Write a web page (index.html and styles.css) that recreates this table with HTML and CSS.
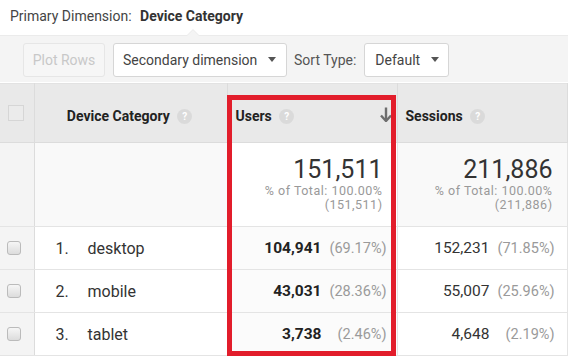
FILE: index.html
```html
<!DOCTYPE html>
<html>
<head>
<meta charset="utf-8">
<link rel="stylesheet" href="styles.css">
</head>
<body>
<div class="page">
  <div class="primary">Primary Dimension: <b>Device Category</b></div>
  <div class="toolbar">
    <span class="btn disabled">Plot Rows</span>
    <span class="btn sec">Secondary dimension <span class="caret"></span></span>
    <span class="label">Sort Type:</span>
    <span class="btn def">Default <span class="caret"></span></span>
  </div>
  <div class="tablewrap">
    <table class="data">
      <colgroup><col class="c0"><col class="c1"><col class="c2"><col class="c3"></colgroup>
      <thead>
        <tr>
          <th class="cb"><span class="hbox"></span></th>
          <th class="dim">Device Category <span class="help">?</span></th>
          <th class="met sorted">Users <span class="help">?</span><svg class="arrow" width="12" height="15" viewBox="0 0 12 15"><path d="M6 0.5V12.5" stroke="#6e6e6e" stroke-width="2.4" fill="none"/><path d="M1 8.5L6 14L11 8.5" stroke="#6e6e6e" stroke-width="2.4" fill="none" stroke-linejoin="miter"/></svg></th>
          <th class="met">Sessions <span class="help">?</span></th>
        </tr>
      </thead>
      <tbody>
        <tr class="total">
          <td class="cb"></td>
          <td class="dim"></td>
          <td class="num u"><div class="big">151,511</div><div class="pct">% of Total: 100.00%</div><div class="pct">(151,511)</div></td>
          <td class="num s"><div class="big">211,886</div><div class="pct">% of Total: 100.00%</div><div class="pct">(211,886)</div></td>
        </tr>
        <tr class="row">
          <td class="cb"><span class="rbox"></span></td>
          <td class="name"><span class="idx">1.</span>desktop</td>
          <td class="num u"><b>104,941</b><span class="p">(69.17%)</span></td>
          <td class="num s">152,231<span class="p">(71.85%)</span></td>
        </tr>
        <tr class="row">
          <td class="cb"><span class="rbox"></span></td>
          <td class="name"><span class="idx">2.</span>mobile</td>
          <td class="num u"><b>43,031</b><span class="p">(28.36%)</span></td>
          <td class="num s">55,007<span class="p">(25.96%)</span></td>
        </tr>
        <tr class="row">
          <td class="cb"><span class="rbox"></span></td>
          <td class="name"><span class="idx">3.</span>tablet</td>
          <td class="num u"><b>3,738</b><span class="p">(2.46%)</span></td>
          <td class="num s">4,648<span class="p">(2.19%)</span></td>
        </tr>
      </tbody>
    </table>
    <div class="highlight"></div>
  </div>
</div>
</body>
</html>
```

FILE: styles.css
```css
* { box-sizing: border-box; }
html, body { margin: 0; padding: 0; background: #fff; }
body { font-family: Roboto, "Liberation Sans", Arial, sans-serif; color: #333; }
.page { width: 574px; height: 363px; overflow: hidden; }

.primary { font-size: 14px; color: #444; padding: 8px 0 0 10px; height: 35px; white-space: nowrap; }
.primary b { font-weight: 700; color: #333; margin-left: 5px; }

.toolbar {
  position: relative;
  width: 568px;
  height: 47px;
  background: #f4f4f4;
  border-top: 1px solid #ebebeb;
  display: flex;
  align-items: center;
  padding-left: 23px;
  padding-top: 1px;
  white-space: nowrap;
}
.toolbar::before {
  content: "";
  position: absolute;
  left: 186px; top: -7px;
  border-left: 7px solid transparent;
  border-right: 7px solid transparent;
  border-bottom: 7px solid #ebebeb;
}
.toolbar::after {
  content: "";
  position: absolute;
  left: 187px; top: -6px;
  border-left: 6px solid transparent;
  border-right: 6px solid transparent;
  border-bottom: 6px solid #f4f4f4;
}
.btn {
  flex: none;
  height: 34px;
  display: inline-flex;
  align-items: center;
  padding: 0 10px;
  border: 1px solid #d6d6d6;
  border-radius: 3px;
  background: #fff;
  font-size: 14px;
  color: #444;
  white-space: nowrap;
}
.btn.disabled { width: 82px; padding: 0; justify-content: center; color: #c8c8c8; border-color: #e6e6e6; background: #f6f6f6; }
.btn.sec { width: 174px; margin-left: 8px; padding-left: 9px; }
.btn.def { width: 85px; margin-left: 8px; padding-left: 10px; }
.label { flex: none; font-size: 14px; color: #555; margin-left: 7px; }
.caret {
  display: inline-block;
  margin-left: 11px;
  border-left: 4.5px solid transparent;
  border-right: 4.5px solid transparent;
  border-top: 5px solid #555;
}

.tablewrap { position: relative; width: 567px; margin-top: 1px; }
table.data { border-collapse: collapse; table-layout: fixed; width: 567px; }
col.c0 { width: 34px; }
col.c1 { width: 193px; }
col.c2 { width: 170px; }
col.c3 { width: 170px; }

th { background: #e9e9e9; height: 59px; font-size: 14px; font-weight: 700; color: #222; border-top: 1px solid #e2e2e2; border-bottom: 1px solid #dcdcdc; padding: 5px 0 0 0; white-space: nowrap; }
th.cb, td.cb { border-right: 1px solid #dcdcdc; }
th.dim { text-align: center; padding-right: 2px; border-right: 1px solid #dcdcdc; }
th.met { text-align: left; padding-left: 8px; border-right: 1px solid #dcdcdc; position: relative; }
.hbox { display: block; width: 16px; height: 16px; margin: -5px 0 0 8px; border: 1px solid #d6d6d6; background: #ebebeb; }
.help {
  display: inline-block;
  width: 15px; height: 15px;
  border-radius: 50%;
  background: #dadada;
  color: #fff;
  font-size: 10px;
  font-weight: 700;
  text-align: center;
  line-height: 15px;
  margin-left: 4px;
  vertical-align: 1px;
}
.arrow { position: absolute; right: 5px; top: 23px; }

td { padding: 0; border-bottom: 1px solid #e4e4e4; white-space: nowrap; }
td.dim, td.name, td.num { border-right: 1px solid #e4e4e4; }
tr.total td { height: 84px; background: #f9f9f9; vertical-align: top; }
tr.total td.cb { background: #f4f4f4; }
tr.total td.u { background: #fff; }
td.num { text-align: right; padding-right: 10px; }
td.num.s { padding-right: 12px; }
tr.total td.num { padding-top: 13px; padding-right: 14px; }
.big { font-size: 25px; color: #333; line-height: 28px; }
.pct { font-size: 12.5px; color: #999; line-height: 14px; letter-spacing: 0.5px; }

tr.row td { height: 43px; font-size: 15.5px; color: #333; }
tr.row td.cb { background: #f4f4f4; }
tr.row td.u { background: #fbfbfb; }
td.name { padding-left: 21px; color: #444; font-size: 16px !important; }
.idx { display: inline-block; width: 32px; }
td.num b { font-weight: 700; color: #222; }
.p { display: inline-block; width: 57px; text-align: right; font-size: 14.5px; color: #9a9a9a; margin-left: 8px; }
.rbox { display: block; width: 14px; height: 14px; margin-left: 7px; border: 1px solid #bbb; border-radius: 3px; background: linear-gradient(#f6f6f6, #dcdcdc); }

.highlight {
  position: absolute;
  left: 227px; top: 12px;
  width: 169px; height: 261px;
  border: 5px solid #e21d2b;
  pointer-events: none;
}
```
